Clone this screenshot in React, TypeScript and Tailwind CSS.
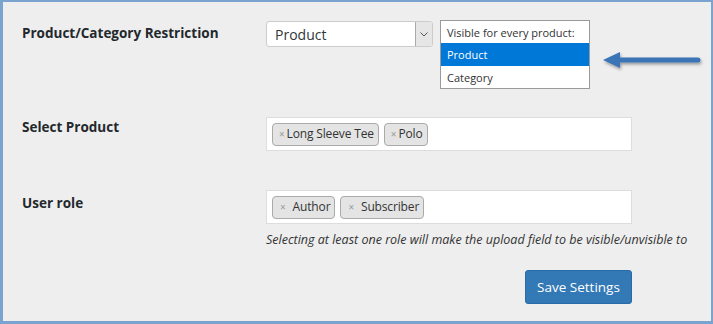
import React from "react";

const font = { fontFamily: '"Open Sans", "Noto Sans", sans-serif' };

function Tag({ label, wide }: { label: string; wide?: boolean }) {
  return (
    <span className="flex h-[23px] items-center rounded-[4px] border border-[#aaaaaa] bg-[#e4e4e4] pl-[6px] pr-[4px] text-[12px] leading-none tracking-[-0.15px] text-[#333]">
      <span className={`text-[10px] text-[#999] ${wide ? "mr-[7px] ml-[1px]" : "mr-[2px]"}`}>×</span>
      {label}
    </span>
  );
}

export default function App() {
  return (
    <div
      className="relative box-border h-[324px] w-[713px] border-b-[3px] border-l-[3px] border-r-[2px] border-t-[2px] border-[#7ba3cf] bg-[#eeeeee] text-[#23282d]"
      style={font}
    >
      {/* Row 1 */}
      <div className="mt-[19px] flex items-start">
        <div className="w-[263px] shrink-0 pl-[19px] pt-[2px] text-[13.5px] font-bold leading-[20px]">
          Product/Category Restriction
        </div>
        <div className="flex items-start">
          <div className="flex h-[26px] w-[167px] overflow-hidden rounded-[3px] border border-[#cccccc] bg-white">
            <div className="flex flex-1 items-center pl-[8px] text-[14px] text-[#32373c]">Product</div>
            <div className="flex w-[17px] items-center justify-center border-l border-[#aaaaaa] bg-[#e6e6e6]">
              <svg width="8" height="5" viewBox="0 0 8 5">
                <path d="M0.5 0.5 L4 4 L7.5 0.5" fill="none" stroke="#555" strokeWidth="1" />
              </svg>
            </div>
          </div>
          <div className="ml-[7px] -mt-px w-[150px] border border-[#9a9a9a] bg-white text-[11px] leading-none">
            <div className="flex h-[22px] items-center pl-[6px] text-[#333]">Visible for every product:</div>
            <div className="flex h-[23px] items-center bg-[#0078d7] pl-[6px] text-white">Product</div>
            <div className="flex h-[22px] items-center pl-[6px] pt-px text-[#333]">Category</div>
          </div>
        </div>
      </div>

      {/* Arrow */}
      <svg className="absolute left-[595px] top-[47px]" width="110" height="28" viewBox="0 0 110 28">
        <defs>
          <filter id="sh" x="-20%" y="-50%" width="140%" height="200%">
            <feDropShadow dx="1" dy="2" stdDeviation="1.5" floodColor="#000" floodOpacity="0.35" />
          </filter>
        </defs>
        <g filter="url(#sh)">
          <path d="M5 11 L22 3 L22 8.5 L100 8.5 A2.5 2.5 0 0 1 100 13.5 L22 13.5 L22 19 Z" fill="#3a74b6" />
        </g>
      </svg>

      {/* Row 2 */}
      <div className="mt-[28px] flex items-start">
        <div className="w-[263px] shrink-0 pl-[19px] text-[13.5px] font-bold leading-[20px]">
          Select Product
        </div>
        <div className="flex h-[34px] w-[366px] items-center gap-[5px] border border-[#dddddd] bg-white pl-[5px]">
          <Tag label="Long Sleeve Tee" />
          <Tag label="Polo" />
        </div>
      </div>

      {/* Row 3 */}
      <div className="mt-[39px] flex items-start">
        <div className="w-[263px] shrink-0 pl-[19px] pt-[3px] text-[13.5px] font-bold leading-[20px]">
          User role
        </div>
        <div className="w-[440px]">
          <div className="flex h-[34px] w-[366px] items-center gap-[5px] border border-[#dddddd] bg-white pl-[5px]">
            <Tag label="Author" wide />
            <Tag label="Subscriber" wide />
          </div>
          <div className="mt-[8px] whitespace-nowrap text-[12.5px] italic leading-[16px] text-[#333]">
            Selecting at least one role will make the upload field to be visible/unvisible to
          </div>
          <div className="mt-[22px] flex w-[366px] justify-end">
            <button className="h-[34px] w-[107px] rounded-[3px] border border-[#2a6aa5] bg-[#3379b6] text-[13.5px] text-white">
              Save Settings
            </button>
          </div>
        </div>
      </div>
    </div>
  );
}
